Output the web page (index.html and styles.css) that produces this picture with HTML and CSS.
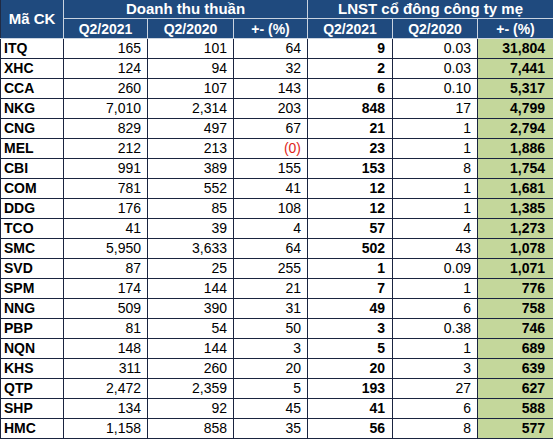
FILE: index.html
```html
<!DOCTYPE html>
<html>
<head>
<meta charset="utf-8">
<link rel="stylesheet" href="styles.css">
</head>
<body>
<table class="t">
<colgroup>
<col class="c1"><col class="c2"><col class="c3"><col class="c4"><col class="c5"><col class="c6"><col class="c7">
</colgroup>
<thead>
<tr class="h1"><th rowspan="2" class="code">Mã CK</th><th colspan="3">Doanh thu thuần</th><th colspan="3">LNST cổ đông công ty mẹ</th></tr>
<tr class="h2"><th>Q2/2021</th><th>Q2/2020</th><th>+- (%)</th><th>Q2/2021</th><th>Q2/2020</th><th>+- (%)</th></tr>
</thead>
<tbody>
<tr><td class="k">ITQ</td><td>165</td><td>101</td><td>64</td><td class="b">9</td><td>0.03</td><td class="g">31,804</td></tr>
<tr><td class="k">XHC</td><td>124</td><td>94</td><td>32</td><td class="b">2</td><td>0.03</td><td class="g">7,441</td></tr>
<tr><td class="k">CCA</td><td>260</td><td>107</td><td>143</td><td class="b">6</td><td>0.10</td><td class="g">5,317</td></tr>
<tr><td class="k">NKG</td><td>7,010</td><td>2,314</td><td>203</td><td class="b">848</td><td>17</td><td class="g">4,799</td></tr>
<tr><td class="k">CNG</td><td>829</td><td>497</td><td>67</td><td class="b">21</td><td>1</td><td class="g">2,794</td></tr>
<tr><td class="k">MEL</td><td>212</td><td>213</td><td class="neg">(0)</td><td class="b">23</td><td>1</td><td class="g">1,886</td></tr>
<tr><td class="k">CBI</td><td>991</td><td>389</td><td>155</td><td class="b">153</td><td>8</td><td class="g">1,754</td></tr>
<tr><td class="k">COM</td><td>781</td><td>552</td><td>41</td><td class="b">12</td><td>1</td><td class="g">1,681</td></tr>
<tr><td class="k">DDG</td><td>176</td><td>85</td><td>108</td><td class="b">12</td><td>1</td><td class="g">1,385</td></tr>
<tr><td class="k">TCO</td><td>41</td><td>39</td><td>4</td><td class="b">57</td><td>4</td><td class="g">1,273</td></tr>
<tr><td class="k">SMC</td><td>5,950</td><td>3,633</td><td>64</td><td class="b">502</td><td>43</td><td class="g">1,078</td></tr>
<tr><td class="k">SVD</td><td>87</td><td>25</td><td>255</td><td class="b">1</td><td>0.09</td><td class="g">1,071</td></tr>
<tr><td class="k">SPM</td><td>174</td><td>144</td><td>21</td><td class="b">7</td><td>1</td><td class="g">776</td></tr>
<tr><td class="k">NNG</td><td>509</td><td>390</td><td>31</td><td class="b">49</td><td>6</td><td class="g">758</td></tr>
<tr><td class="k">PBP</td><td>81</td><td>54</td><td>50</td><td class="b">3</td><td>0.38</td><td class="g">746</td></tr>
<tr><td class="k">NQN</td><td>148</td><td>144</td><td>3</td><td class="b">5</td><td>1</td><td class="g">689</td></tr>
<tr><td class="k">KHS</td><td>311</td><td>260</td><td>20</td><td class="b">20</td><td>3</td><td class="g">639</td></tr>
<tr><td class="k">QTP</td><td>2,472</td><td>2,359</td><td>5</td><td class="b">193</td><td>27</td><td class="g">627</td></tr>
<tr><td class="k">SHP</td><td>134</td><td>92</td><td>45</td><td class="b">41</td><td>6</td><td class="g">588</td></tr>
<tr><td class="k">HMC</td><td>1,158</td><td>858</td><td>35</td><td class="b">56</td><td>8</td><td class="g">577</td></tr>
</tbody>
</table>
</body>
</html>
```
FILE: styles.css
```css
html, body {
  margin: 0;
  padding: 0;
  background: #ffffff;
}
.t {
  border-collapse: collapse;
  table-layout: fixed;
  width: 553px;
  font-family: "Liberation Sans", Arial, sans-serif;
  font-size: 14px;
  color: #000;
}
.c1 { width: 63px; }
.c2 { width: 84px; }
.c3 { width: 86px; }
.c4 { width: 74px; }
.c5 { width: 85px; }
.c6 { width: 85px; }
.c7 { width: 76px; }
th {
  background: #1f4a7e;
  color: #ffffff;
  font-weight: bold;
  text-align: center;
  padding: 0;
  border: 1px solid #c9d3e0;
  border-top: none;
  line-height: 18px;
}
.h1 th {
  height: 18px;
  font-size: 15px;
}
.h2 th {
  height: 19px;
  font-size: 14px;
}
th.code {
  font-size: 15px;
  border-left: 1px solid #1f2a44;
}
td {
  height: 19px;
  padding: 0 6px 0 0;
  text-align: right;
  border: 1px solid #1a2440;
  line-height: 19px;
  white-space: nowrap;
}
td.k {
  text-align: left;
  font-weight: bold;
  padding: 0 0 0 3px;
}
td.b { font-weight: bold; padding-right: 7px; }
td.g {
  background: #c4d79b;
  font-weight: bold;
  padding-right: 8px;
}
td.neg { color: #e0261b; }
```
